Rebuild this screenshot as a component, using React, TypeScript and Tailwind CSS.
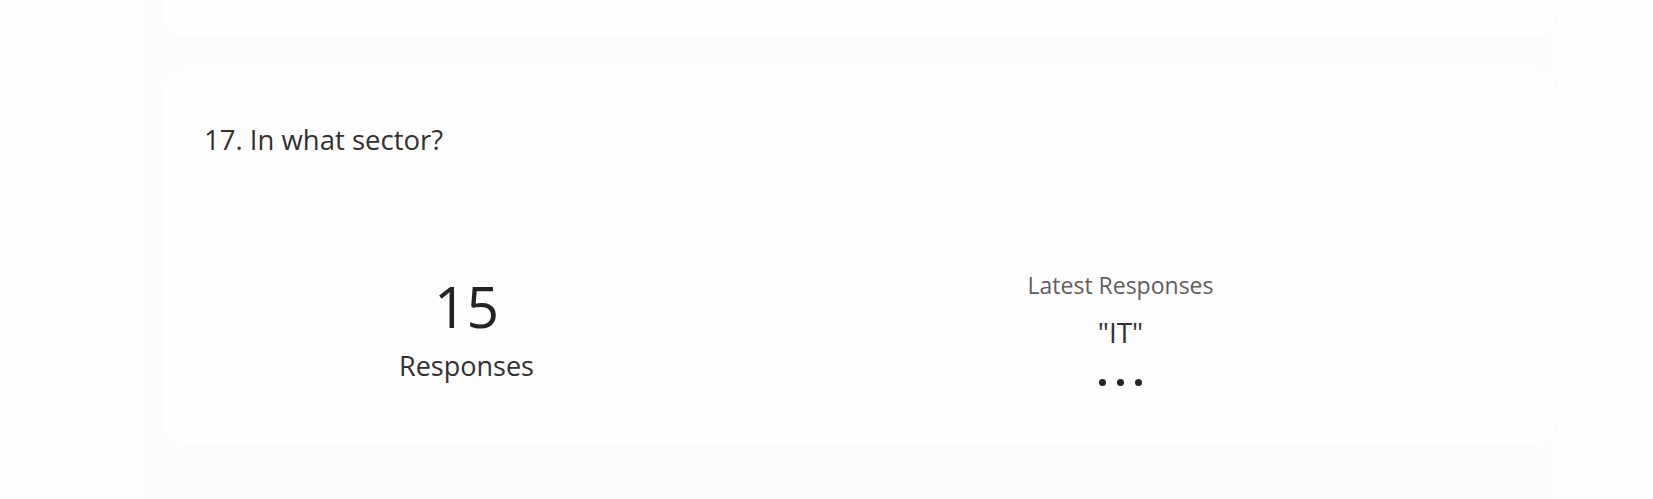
import React from 'react';

const font = { fontFamily: '"Open Sans", "Noto Sans", sans-serif' };

const SectorSummary = () => {
  return (
    <div className="pl-[41px] pr-[38px]">
      <h3 className="text-[27.5px] leading-[36px] text-[#323130] pt-[52px]">17. In what sector?</h3>
      <div className="flex mt-[112px]">
        <div className="w-[525px] flex flex-col items-center pt-[6px]">
          <div className="text-[57px] leading-[60px] text-[#252423]">15</div>
          <div className="text-[27px] leading-[36px] text-[#323130] mt-[12px]">Responses</div>
        </div>
        <div className="flex-1 flex flex-col items-center pr-[6px]">
          <div className="text-[23px] leading-[30px] text-[#605e5c]">Latest Responses</div>
          <div className="text-[28px] leading-[36px] text-[#323130] mt-[14px]">"IT"</div>
          <div className="flex gap-[11px] mt-[29px]">
            <span className="h-[7px] w-[7px] rounded-full bg-[#252423]"></span>
            <span className="h-[7px] w-[7px] rounded-full bg-[#252423]"></span>
            <span className="h-[7px] w-[7px] rounded-full bg-[#252423]"></span>
          </div>
        </div>
      </div>
    </div>
  );
};

export default function App() {
  return (
    <div className="h-[499px] overflow-hidden bg-[#fefefe]" style={font}>
      <div className="ml-[142px] w-[1416px] h-full bg-[#fcfcfc] pl-[21px] pr-[2px]">
        <div className="h-[37px] bg-[#fefefe] rounded-b-[24px]"></div>
        <div className="mt-[33px] h-[374px] bg-[#fefefe] rounded-[24px]">
          <SectorSummary />
        </div>
      </div>
    </div>
  );
}
